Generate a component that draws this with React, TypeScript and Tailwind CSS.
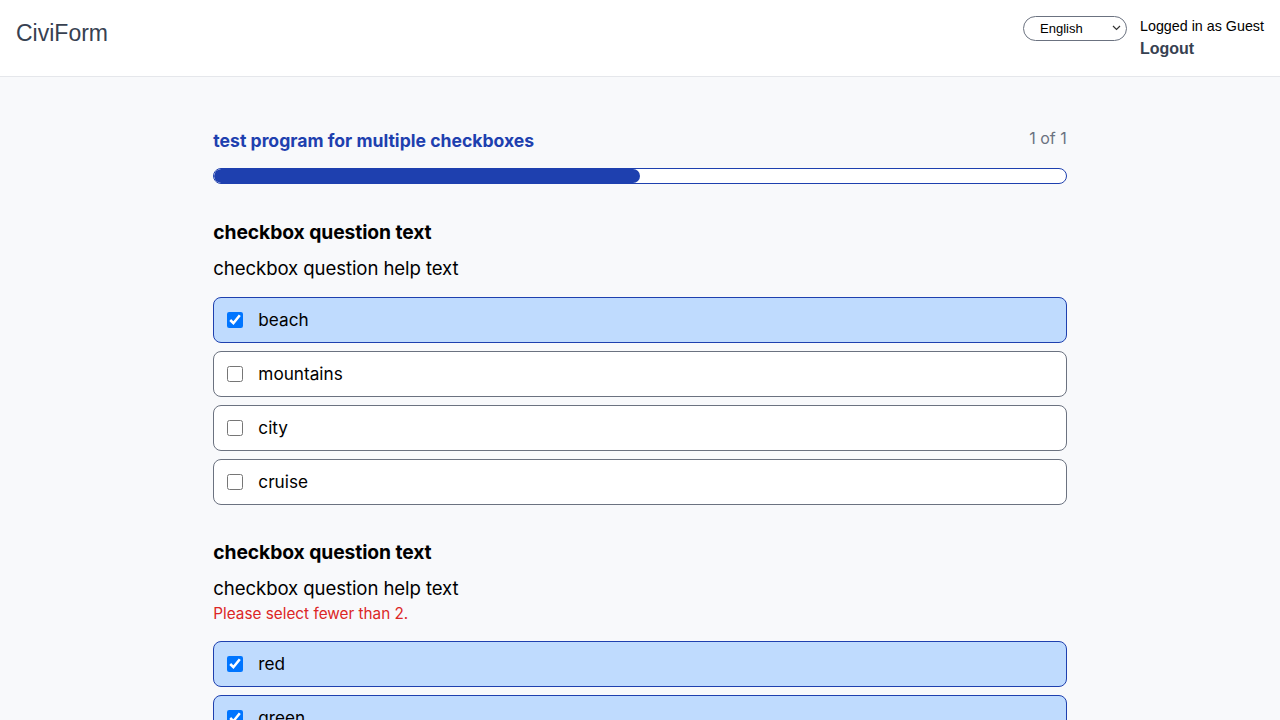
import React, { useState } from 'react';

interface Question {
  title: string;
  help: string;
  error?: string;
  options: string[];
  checked: string[];
}

const questions: Question[] = [
  {
    title: 'checkbox question text',
    help: 'checkbox question help text',
    options: ['beach', 'mountains', 'city', 'cruise'],
    checked: ['beach'],
  },
  {
    title: 'checkbox question text',
    help: 'checkbox question help text',
    error: 'Please select fewer than 2.',
    options: ['red', 'green', 'orange', 'blue'],
    checked: ['red', 'green'],
  },
];

const CheckboxQuestion: React.FC<{ q: Question; first: boolean }> = ({ q, first }) => {
  const [checked, setChecked] = useState<string[]>(q.checked);
  const toggle = (o: string) =>
    setChecked((c) => (c.includes(o) ? c.filter((x) => x !== o) : [...c, o]));

  return (
    <div className={first ? 'mt-[34px]' : 'mt-[33px]'}>
      <div className="text-[19.3px] font-bold leading-7 tracking-[-0.005em] text-black">{q.title}</div>
      <div className="mt-2 text-[18.6px] leading-7 tracking-[-0.005em] text-black">{q.help}</div>
      {q.error && <div className="text-[15.3px] leading-6 text-[#dc2626]">{q.error}</div>}
      <div className="mt-[15px] flex flex-col gap-2">
        {q.options.map((o) => {
          const on = checked.includes(o);
          return (
            <label
              key={o}
              className={`flex h-[46px] cursor-pointer items-center gap-[15px] rounded-lg border px-[13px] ${
                on ? 'border-[#1e40af] bg-[#bfdbfe]' : 'border-[#6b7280] bg-white'
              }`}
            >
              <input
                type="checkbox"
                checked={on}
                onChange={() => toggle(o)}
                className="h-4 w-4"
              />
              <span className="text-[17.2px] text-black">{o}</span>
            </label>
          );
        })}
      </div>
    </div>
  );
};

export default function App() {
  return (
    <div className="min-h-screen bg-[#f8f9fb] font-['Inter',sans-serif]">
      <header className="flex h-[77px] items-start justify-between border-b border-[#e5e7eb] bg-white px-4 font-['Liberation_Sans',Arial,sans-serif]">
        <div className="mt-[16px] text-[23px] text-[#374151]">CiviForm</div>
        <div className="mt-[16px] flex items-start gap-[13px]">
          <div className="relative">
            <select className="h-[25px] w-[104px] appearance-none rounded-full border border-[#6b7280] bg-white pl-4 text-[13px] text-black">
              <option>English</option>
            </select>
            <svg
              className="pointer-events-none absolute right-[6px] top-[9px]"
              width="9"
              height="6"
              viewBox="0 0 9 6"
              fill="none"
              stroke="#333"
              strokeWidth="1.2"
            >
              <path d="M1 1l3.5 3.5L8 1" />
            </svg>
          </div>
          <div className="flex flex-col">
            <span className="text-[14.3px] leading-5 text-black">Logged in as Guest</span>
            <span className="mt-[3px] text-base font-bold leading-5 text-[#374151]">Logout</span>
          </div>
        </div>
      </header>

      <main className="mx-auto w-2/3 pt-[49px] pb-10">
        <div className="flex items-start justify-between">
          <div className="mt-[1px] text-[17.6px] font-bold leading-7 text-[#1e40af]">
            test program for multiple checkboxes
          </div>
          <div className="text-base leading-6 text-[#6b7280]">1 of 1</div>
        </div>
        <div className="mt-[13px] h-4 w-full overflow-hidden rounded-full border border-[#1e40af] bg-white">
          <div className="h-full w-1/2 rounded-full bg-[#1e40af]" />
        </div>

        {questions.map((q, i) => (
          <CheckboxQuestion key={i} q={q} first={i === 0} />
        ))}
      </main>
    </div>
  );
}
